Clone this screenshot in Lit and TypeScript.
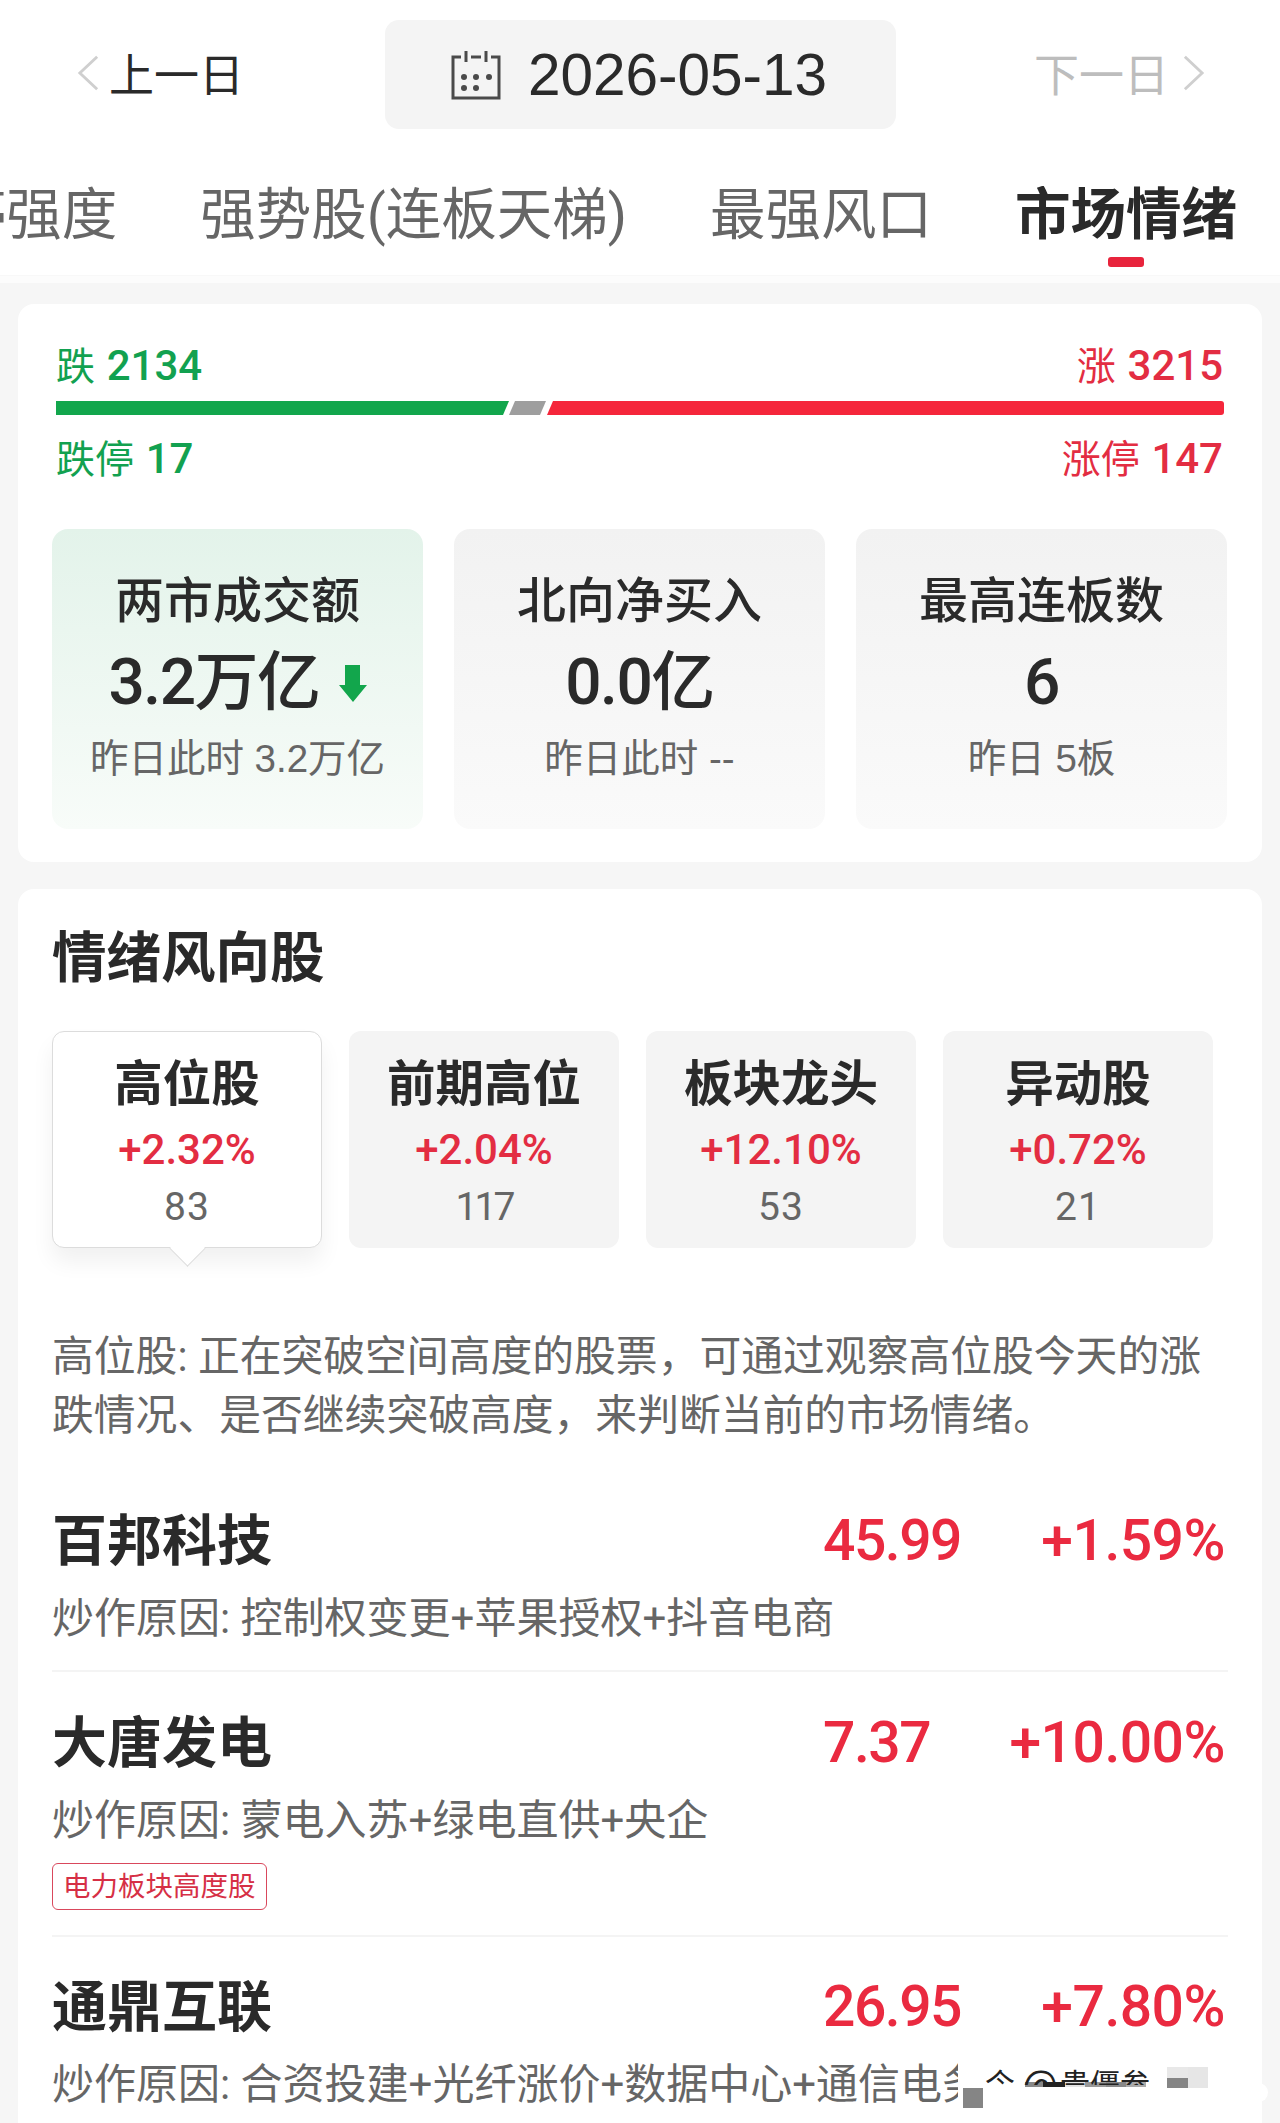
import { LitElement, css, html } from 'lit';
import { customElement } from 'lit/decorators.js';

const stats = [
  { title: '两市成交额', value: '3.2万亿', sub: '昨日此时 3.2万亿', down: true },
  { title: '北向净买入', value: '0.0亿', sub: '昨日此时 --', down: false },
  { title: '最高连板数', value: '6', sub: '昨日 5板', down: false },
];

const groups = [
  { name: '高位股', pct: '+2.32%', count: '83', active: true },
  { name: '前期高位', pct: '+2.04%', count: '117', active: false },
  { name: '板块龙头', pct: '+12.10%', count: '53', active: false },
  { name: '异动股', pct: '+0.72%', count: '21', active: false },
];

const desc =
  '高位股: 正在突破空间高度的股票\uFF0C可通过观察高位股今天的涨跌情况、是否继续突破高度\uFF0C来判断当前的市场情绪。';

const stocks = [
  { name: '百邦科技', price: '45.99', pct: '+1.59%', reason: '炒作原因: 控制权变更+苹果授权+抖音电商', tag: '' },
  { name: '大唐发电', price: '7.37', pct: '+10.00%', reason: '炒作原因: 蒙电入苏+绿电直供+央企', tag: '电力板块高度股' },
  { name: '通鼎互联', price: '26.95', pct: '+7.80%', reason: '炒作原因: 合资投建+光纤涨价+数据中心+通信电务', tag: '' },
];

@customElement('app-root')
export class AppRoot extends LitElement {
  static styles = css`
    :host {
      display: block;
      position: relative;
      width: 1280px;
      height: 2123px;
      overflow: hidden;
      background: #f6f6f6;
      color: #2a2a2a;
      font-family: Roboto, 'Noto Sans CJK SC', sans-serif;
    }

    .head {
      background: #fff;
      height: 276px;
      border-bottom: 1px solid #f8f8f8;
      box-sizing: border-box;
      padding-top: 20px;
    }
    .band {
      height: 7px;
      background: #fcfcfc;
    }

    .dates {
      display: grid;
      grid-template-columns: 385px 511px 384px;
      height: 109px;
      font-family: 'Noto Sans CJK SC', sans-serif;
    }
    .nav {
      display: flex;
      align-items: center;
      gap: 9px;
      padding-bottom: 3px;
      font-size: 45px;
      line-height: 50px;
    }
    .prev {
      padding-left: 77px;
    }
    .next {
      justify-content: flex-end;
      padding-right: 75px;
      color: #bdbdbd;
      gap: 13px;
    }
    .date {
      display: flex;
      align-items: center;
      justify-content: center;
      gap: 27px;
      padding-right: 3px;
      background: #f4f4f4;
      border-radius: 14px;
      font-family: 'Liberation Sans', sans-serif;
      font-size: 58.5px;
    }

    .tabs {
      display: flex;
      justify-content: flex-end;
      gap: 83px;
      margin-top: 57px;
      padding-right: 43px;
      overflow: hidden;
      font-size: 55.5px;
      line-height: 60px;
      color: #666;
      white-space: nowrap;
    }
    .tab {
      display: flex;
      flex-direction: column;
      align-items: center;
      flex: none;
      gap: 11px;
    }
    .tab.on {
      color: #2a2a2a;
      font-weight: 700;
    }
    .tab i {
      width: 36px;
      height: 10px;
      border-radius: 3px;
      background: #e8243c;
    }

    .card {
      background: #fff;
      margin: 0 18px;
      border-radius: 16px;
      padding: 34px;
    }
    .card + .card {
      margin-top: 27px;
    }
    .breadth {
      margin-top: 21px;
      padding-top: 37px;
      padding-bottom: 33px;
    }

    .line {
      display: flex;
      justify-content: space-between;
      padding: 0 5px 0 4px;
      font-size: 39px;
      line-height: 50px;
    }
    .line b {
      font-size: 42px;
      font-weight: 500;
      margin-left: 2px;
    }
    .fall {
      color: #12a150;
    }
    .rise {
      color: #e32d42;
    }
    .bar {
      display: flex;
      height: 14px;
      margin: 9px 4px 19px;
      gap: 1px;
    }
    .bar div {
      height: 100%;
    }
    .bar .g {
      width: 453px;
      background: #12a64c;
      clip-path: polygon(0 0, 100% 0, calc(100% - 6px) 100%, 0 100%);
    }
    .bar .n {
      width: 37px;
      margin-left: -1px;
      background: #9e9e9e;
      clip-path: polygon(6px 0, 100% 0, calc(100% - 6px) 100%, 0 100%);
    }
    .bar .r {
      flex: 1;
      background: #f5263b;
      border-radius: 0 3px 3px 0;
      clip-path: polygon(6px 0, 100% 0, 100% 100%, 0 100%);
    }

    .stats {
      display: grid;
      grid-template-columns: repeat(3, 371px);
      gap: 31px;
      margin-top: 44px;
    }
    .stat {
      display: flex;
      flex-direction: column;
      align-items: center;
      height: 300px;
      box-sizing: border-box;
      padding-top: 38px;
      border-radius: 16px;
      background: linear-gradient(#f2f2f2, #fafafa);
    }
    .stat.hot {
      background: linear-gradient(#e3f3ea, #f8fcf9);
    }
    .stat .t {
      font-size: 49px;
      line-height: 60px;
      font-weight: 500;
      font-family: 'Noto Sans CJK SC', sans-serif;
    }
    .stat .v {
      display: flex;
      align-items: center;
      gap: 19px;
      margin-top: 16px;
      font-size: 64px;
      line-height: 80px;
      font-weight: 500;
      letter-spacing: -1.5px;
    }
    .stat .s {
      margin-top: 11px;
      font-family: 'Liberation Sans', 'Noto Sans CJK SC', sans-serif;
      font-size: 38.5px;
      line-height: 50px;
      color: #666;
    }

    .title {
      margin: 0;
      font-size: 54.5px;
      line-height: 70px;
      font-weight: 700;
    }

    .groups {
      display: grid;
      grid-template-columns: repeat(4, 270px);
      gap: 27px;
      margin-top: 38px;
    }
    .group {
      position: relative;
      display: flex;
      flex-direction: column;
      align-items: center;
      height: 217px;
      box-sizing: border-box;
      padding-top: 24px;
      border-radius: 12px;
      background: #f4f4f4;
    }
    .group.on {
      background: #fff;
      border: 1px solid #dcdcdc;
      padding-top: 23px;
      box-shadow: 0 14px 22px rgba(0, 0, 0, 0.06);
    }
    .group.on::after {
      content: '';
      position: absolute;
      left: 121px;
      bottom: -15px;
      width: 26px;
      height: 26px;
      background: #fff;
      border-right: 1px solid #dcdcdc;
      border-bottom: 1px solid #dcdcdc;
      transform: rotate(45deg) scale(0.95);
      transform-origin: center;
    }
    .group .n {
      font-size: 48.5px;
      line-height: 60px;
      font-weight: 700;
    }
    .group .p {
      margin-top: 10px;
      font-size: 42px;
      line-height: 50px;
      font-weight: 500;
      color: #e32d42;
    }
    .group .c {
      margin-top: 7px;
      font-size: 39px;
      line-height: 50px;
      letter-spacing: 1px;
      color: #666;
    }
    .group .c.tight {
      letter-spacing: -3px;
    }

    .desc {
      margin: 79px 0 0;
      width: 1170px;
      font-size: 41.8px;
      line-height: 59px;
      color: #666;
    }

    .rows {
      margin-top: 25px;
    }
    .row {
      padding: 36px 0 26px;
      border-bottom: 2px solid #f4f4f4;
    }
    .row:last-child {
      padding-top: 35px;
      border-bottom: 0;
    }
    .quote {
      display: grid;
      grid-template-columns: 771px 1fr auto;
      line-height: 70px;
    }
    .quote .name {
      font-size: 55px;
      font-weight: 700;
    }
    .quote .num {
      font-size: 57px;
      font-weight: 500;
      letter-spacing: -1.5px;
      color: #ea2a40;
    }
    .quote .pct {
      padding-right: 3px;
      letter-spacing: -0.5px;
    }
    .reason {
      margin-top: 18px;
      font-size: 42px;
      line-height: 50px;
      color: #666;
      white-space: nowrap;
    }
    .tag {
      display: inline-block;
      margin: 17px 0 -1px;
      padding: 0 10px;
      border: 1px solid #d9485c;
      border-radius: 6px;
      font-size: 27.5px;
      line-height: 45px;
      color: #d62f45;
    }

    /* scrubbed watermark sitting over the last row */
    .mark {
      position: absolute;
      left: 958px;
      top: 2052px;
      width: 304px;
      height: 66px;
      background: #fff;
    }
    .mark span {
      position: absolute;
    }
    .mark .tail {
      left: 290px;
      top: 31px;
      width: 20px;
      height: 19px;
      border-radius: 0 10px 10px 0;
      background: #fff;
    }
    .mark .wm {
      top: 15px;
      height: 18px;
      overflow: hidden;
      font-size: 30px;
      line-height: 36px;
      color: #222;
      white-space: nowrap;
    }
    .mark .wm.at {
      font-size: 40px;
      line-height: 40px;
    }
  `;

  private chevron(dir: 'l' | 'r') {
    const d = dir === 'l' ? 'M21 2 L3 19 L21 36' : 'M3 2 L21 19 L3 36';
    return html`<svg width="23" height="38" viewBox="0 0 24 38" fill="none" stroke="#cfcfcf" stroke-width="3">
      <path d=${d}></path>
    </svg>`;
  }

  private calendar() {
    return html`<svg width="50" height="50" viewBox="0 0 50 50" fill="none" stroke="#4a4a4a" stroke-width="3">
      <path d="M10 7 H2 V48 H48 V7 H40 M20 7 H30"></path>
      <path d="M15 1 V12 M35 1 V12"></path>
      <g fill="#4a4a4a" stroke="none">
        <circle cx="13" cy="27" r="3"></circle>
        <circle cx="25" cy="27" r="3"></circle>
        <circle cx="38" cy="27" r="3"></circle>
        <circle cx="13" cy="38" r="3"></circle>
        <circle cx="25" cy="38" r="3"></circle>
      </g>
    </svg>`;
  }

  private arrow() {
    return html`<svg width="28" height="37" viewBox="0 0 28 37">
      <path d="M6 0 H21 V20 H28 L14 37 L0 20 H6 Z" fill="#12a64c"></path>
    </svg>`;
  }

  // pieces of the scrubbed watermark: [left, top, width, height, colour]
  private markBlocks() {
    const blocks = [
      [5, 36, 20, 20, '#858585'],
      [67, 30, 18, 5, '#888'],
      [85, 30, 22, 5, '#222'],
      [107, 30, 20, 5, '#e4e4e4'],
      [127, 30, 21, 5, '#999'],
      [148, 30, 20, 5, '#888'],
      [168, 30, 20, 5, '#aaa'],
      [209, 26, 21, 10, '#858585'],
      [209, 15, 21, 11, '#e8e8e8'],
      [230, 15, 20, 21, '#e6e6e6'],
    ];
    return blocks.map(
      ([l, t, w, h, c]) => html`<span style="left:${l}px;top:${t}px;width:${w}px;height:${h}px;background:${c}"></span>`
    );
  }

  render() {
    return html`
      <div class="head">
        <div class="dates">
          <div class="nav prev">${this.chevron('l')}<span>上一日</span></div>
          <div class="date">${this.calendar()}<span>2026-05-13</span></div>
          <div class="nav next"><span>下一日</span>${this.chevron('r')}</div>
        </div>
        <div class="tabs">
          <div class="tab">涨停强度</div>
          <div class="tab">强势股(连板天梯)</div>
          <div class="tab">最强风口</div>
          <div class="tab on">市场情绪<i></i></div>
        </div>
      </div>
      <div class="band"></div>

      <section class="card breadth">
        <div class="line"><span class="fall">跌 <b>2134</b></span><span class="rise">涨 <b>3215</b></span></div>
        <div class="bar"><div class="g"></div><div class="n"></div><div class="r"></div></div>
        <div class="line"><span class="fall">跌停 <b>17</b></span><span class="rise">涨停 <b>147</b></span></div>
        <div class="stats">
          ${stats.map(
            (s) => html`<div class="stat ${s.down ? 'hot' : ''}">
              <div class="t">${s.title}</div>
              <div class="v"><span>${s.value}</span>${s.down ? this.arrow() : ''}</div>
              <div class="s">${s.sub}</div>
            </div>`
          )}
        </div>
      </section>

      <section class="card">
        <h2 class="title">情绪风向股</h2>
        <div class="groups">
          ${groups.map(
            (g) => html`<div class="group ${g.active ? 'on' : ''}">
              <div class="n">${g.name}</div>
              <div class="p">${g.pct}</div>
              <div class="c ${g.count === '117' ? 'tight' : ''}">${g.count}</div>
            </div>`
          )}
        </div>
        <p class="desc">${desc}</p>
        <div class="rows">
          ${stocks.map(
            (s) => html`<div class="row">
              <div class="quote">
                <span class="name">${s.name}</span>
                <span class="num">${s.price}</span>
                <span class="num pct">${s.pct}</span>
              </div>
              <div class="reason">${s.reason}</div>
              ${s.tag ? html`<span class="tag">${s.tag}</span>` : ''}
            </div>`
          )}
        </div>
      </section>

      <div class="mark">
        <span class="tail"></span>
        ${this.markBlocks()}
        <span class="wm" style="left:27px">今</span>
        <span class="wm at" style="left:64px">@</span>
        <span class="wm" style="left:102px">贵僵参</span>
      </div>
    `;
  }
}
